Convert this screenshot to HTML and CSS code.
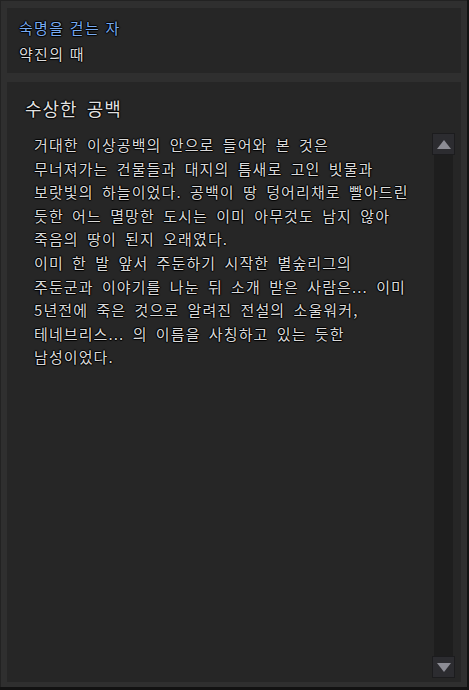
FILE: index.html
```html
<!DOCTYPE html>
<html lang="ko">
<head>
<meta charset="utf-8">
<link rel="stylesheet" href="styles.css">
</head>
<body>
<div class="frame">
  <section class="header-panel">
    <div class="quest-group">숙명을 걷는 자</div>
    <div class="quest-chapter">약진의 때</div>
  </section>
  <section class="story-panel">
    <h1 class="story-title">수상한 공백</h1>
    <div class="story-row">
      <div class="story-text">
        <p>거대한 이상공백의 안으로 들어와 본 것은</p>
        <p>무너져가는 건물들과 대지의 틈새로 고인 빗물과</p>
        <p>보랏빛의 하늘이었다. 공백이 땅 덩어리채로 빨아드린</p>
        <p>듯한 어느 멸망한 도시는 이미 아무것도 남지 않아</p>
        <p>죽음의 땅이 된지 오래였다.</p>
        <p>이미 한 발 앞서 주둔하기 시작한 별숲리그의</p>
        <p>주둔군과 이야기를 나눈 뒤 소개 받은 사람은... 이미</p>
        <p>5년전에 죽은 것으로 알려진 전설의 소울워커,</p>
        <p>테네브리스... 의 이름을 사칭하고 있는 듯한</p>
        <p>남성이었다.</p>
      </div>
      <div class="scrollbar">
        <div class="scroll-btn">
          <svg width="14" height="9" viewBox="0 0 14 9"><polygon points="7,0 14,9 0,9" fill="#8c8c94"/></svg>
        </div>
        <div class="scroll-track"></div>
        <div class="scroll-btn">
          <svg width="14" height="9" viewBox="0 0 14 9"><polygon points="0,0 14,0 7,9" fill="#8c8c94"/></svg>
        </div>
      </div>
    </div>
  </section>
</div>
</body>
</html>
```
FILE: styles.css
```css
html, body {
  margin: 0;
  padding: 0;
  background: #121212;
}
body {
  width: 469px;
  height: 690px;
  overflow: hidden;
  font-family: "Noto Sans CJK KR", "Noto Sans", sans-serif;
}
.frame {
  box-sizing: border-box;
  width: 467px;
  height: 687px;
  background: #2f2f2f;
  border-top: 1px solid #222;
  border-left: 1px solid #222;
  padding: 7px 6px 5px 6px;
  display: flex;
  flex-direction: column;
  gap: 9px;
}
.header-panel {
  background: #262626;
  height: 65px;
  box-sizing: border-box;
  padding: 10px 12px 0 12px;
  text-shadow: 1px 0 1px #000, -1px 0 1px #000, 0 1px 1px #000, 0 -1px 1px #000;
}
.quest-group {
  color: #78aaf0;
  font-size: 15px;
  letter-spacing: 1.3px;
  line-height: 20px;
  height: 20px;
}
.quest-chapter {
  color: #dcdcdc;
  font-size: 15px;
  letter-spacing: 1.3px;
  line-height: 20px;
  margin-top: 6px;
}
.story-panel {
  flex: 1;
  background: #262626;
  display: flex;
  flex-direction: column;
}
.story-title {
  margin: 0;
  font-weight: normal;
  font-size: 18px;
  letter-spacing: 1px;
  word-spacing: 3px;
  line-height: 22px;
  color: #e0e0e0;
  padding: 15px 0 0 18px;
  text-shadow: 1px 0 1px #000, -1px 0 1px #000, 0 1px 1px #000, 0 -1px 1px #000;
}
.story-row {
  flex: 1;
  display: flex;
  margin-top: 14px;
  padding-bottom: 4px;
}
.story-text {
  flex: 1;
  padding: 0 0 0 27px;
  color: #dadada;
  font-size: 15px;
  letter-spacing: 1.1px;
  line-height: 23.6px;
  word-spacing: 3px;
  text-shadow: 1px 0 1px #000, -1px 0 1px #000, 0 1px 1px #000, 0 -1px 1px #000;
}
.story-text p {
  margin: 0;
  white-space: nowrap;
}
.scrollbar {
  width: 23px;
  margin-right: 6px;
  display: flex;
  flex-direction: column;
  align-items: center;
}
.scroll-btn {
  box-sizing: border-box;
  width: 23px;
  height: 22px;
  background: #2c2c30;
  border: 1px solid #1c1c1e;
  display: flex;
  align-items: center;
  justify-content: center;
}
.scroll-track {
  flex: 1;
  width: 19px;
  background: #1e1e1e;
}
```
